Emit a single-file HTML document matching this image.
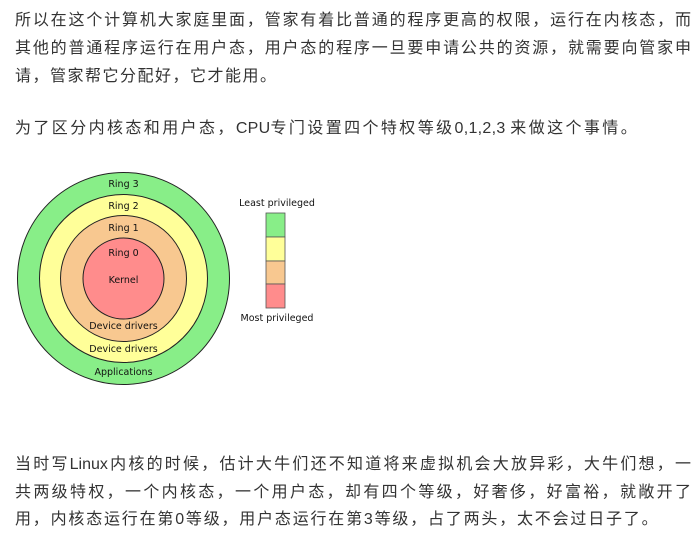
<!DOCTYPE html>
<html><head><meta charset="utf-8"><style>
body{margin:0;width:698px;height:538px;background:#fff;overflow:hidden;position:relative;font-family:"Liberation Sans","Noto Sans CJK SC",sans-serif;color:#333;font-size:16px}
.l{position:absolute;left:15px;white-space:nowrap;line-height:20px}
.j{width:676px;text-align:justify;text-align-last:justify}
.n{letter-spacing:0.3px}
svg{position:absolute;left:0;top:0}
</style></head><body>
<div class="l j" style="top:11px">所以在这个计算机大家庭里面，管家有着比普通的程序更高的权限，运行在内核态，而</div>
<div class="l j" style="top:39px">其他的普通程序运行在用户态，用户态的程序一旦要申请公共的资源，就需要向管家申</div>
<div class="l" style="top:67px;letter-spacing:1.5px">请，管家帮它分配好，它才能用。</div>
<div class="l" style="top:119px;letter-spacing:2.4px">为了区分内核态和用户态，<span class="n">CPU</span>专门设置四个特权等级<span class="n">0,1,2,3 </span>来做这个事情。</div>
<svg width="698" height="538" font-family="DejaVu Sans,sans-serif" font-size="9.5" text-anchor="middle">
<circle cx="123.5" cy="278.5" r="106" fill="#88ee88" stroke="#222" stroke-width="1"/>
<circle cx="123.5" cy="278.5" r="84" fill="#ffff99" stroke="#222" stroke-width="1"/>
<circle cx="123.5" cy="278.5" r="63" fill="#f8c890" stroke="#222" stroke-width="1"/>
<circle cx="123.5" cy="278.5" r="40.5" fill="#ff8c8c" stroke="#222" stroke-width="1"/>
<g fill="#111">
<text x="123.5" y="187">Ring 3</text>
<text x="123.5" y="209">Ring 2</text>
<text x="123.5" y="231">Ring 1</text>
<text x="123.5" y="256">Ring 0</text>
<text x="123.5" y="283">Kernel</text>
<text x="123.5" y="329">Device drivers</text>
<text x="123.5" y="352">Device drivers</text>
<text x="123.5" y="375">Applications</text>
<text x="277" y="206">Least privileged</text>
<text x="277" y="321">Most privileged</text>
</g>
<rect x="266" y="213" width="19" height="24" fill="#88ee88" stroke="#555" stroke-width="0.8"/>
<rect x="266" y="237" width="19" height="24" fill="#ffff99" stroke="#555" stroke-width="0.8"/>
<rect x="266" y="261" width="19" height="23" fill="#f8c890" stroke="#555" stroke-width="0.8"/>
<rect x="266" y="284" width="19" height="24" fill="#ff8c8c" stroke="#555" stroke-width="0.8"/>
</svg>
<div class="l j" style="top:455px">当时写Linux内核的时候，估计大牛们还不知道将来虚拟机会大放异彩，大牛们想，一</div>
<div class="l j" style="top:483px">共两级特权，一个内核态，一个用户态，却有四个等级，好奢侈，好富裕，就敞开了</div>
<div class="l" style="top:510px;letter-spacing:1.8px">用，内核态运行在第0等级，用户态运行在第3等级，占了两头，太不会过日子了。</div>
</body></html>
